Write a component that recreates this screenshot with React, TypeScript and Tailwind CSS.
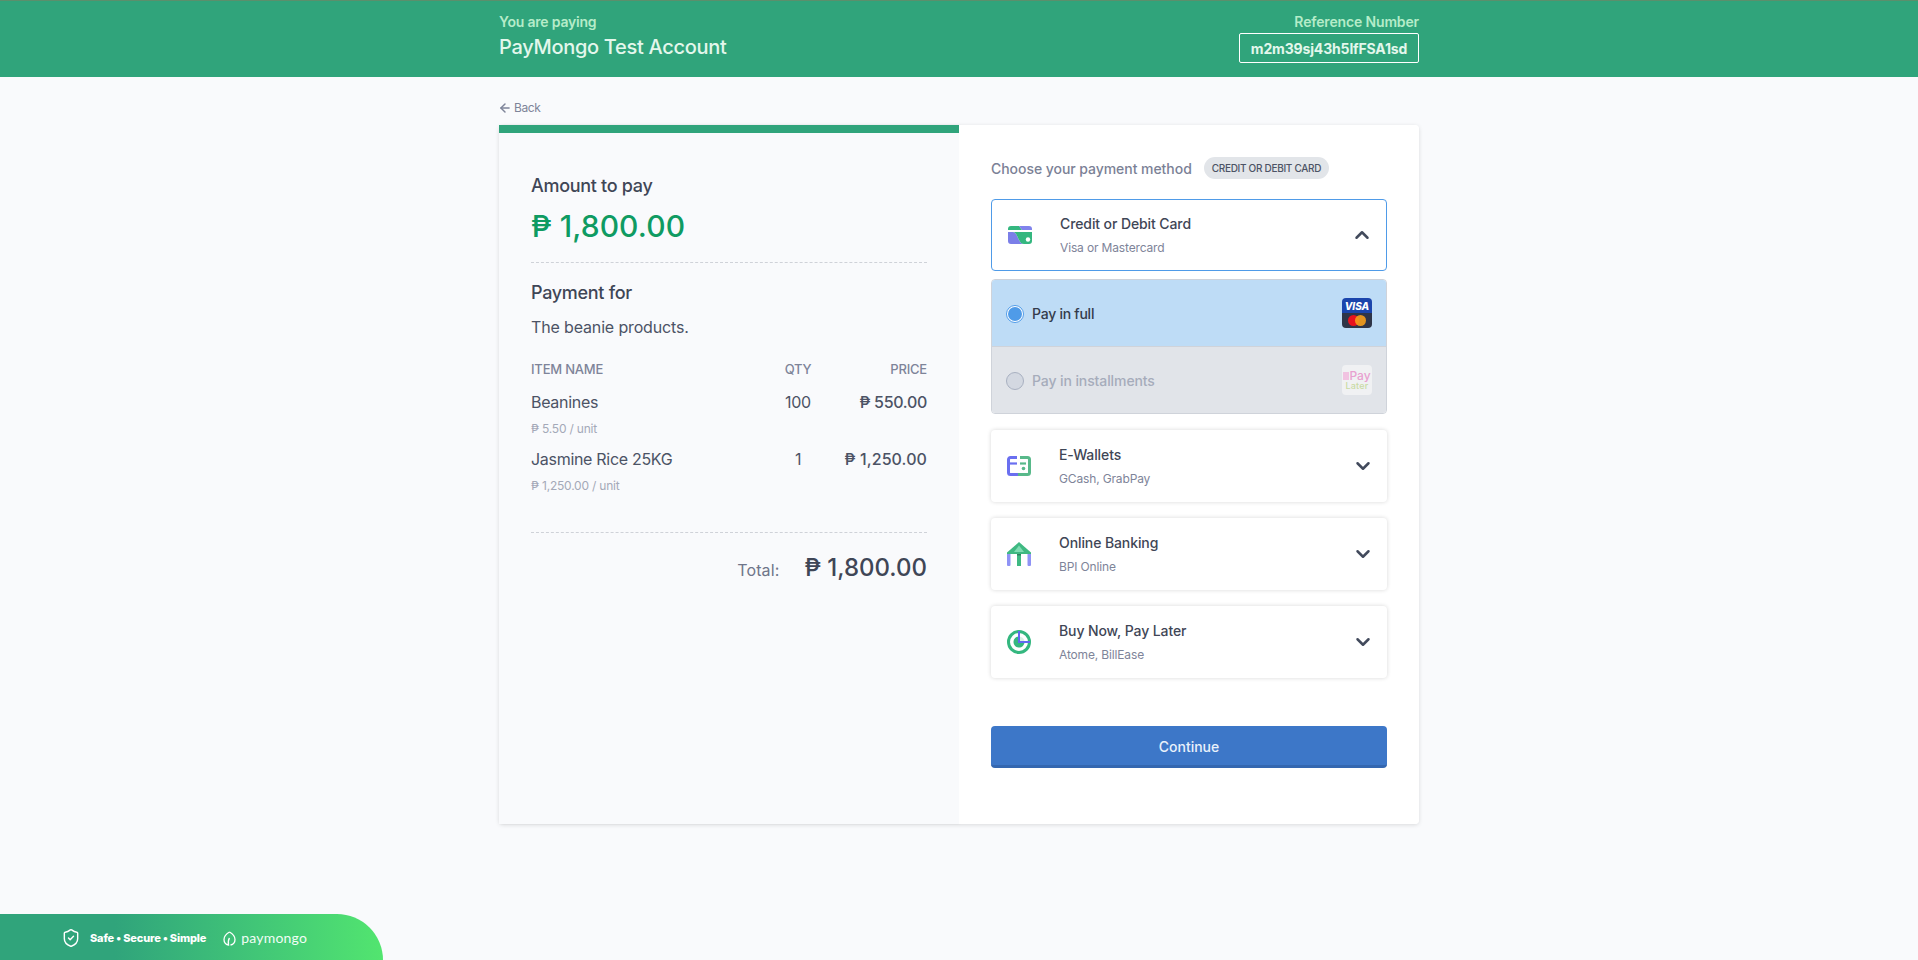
import { ArrowLeft, ChevronDown, ChevronUp, ShieldCheck } from 'lucide-react';
import type { ReactNode } from 'react';

function CardIcon() {
  return (
    <svg width="24" height="18" viewBox="0 0 24 18">
      <path d="M3 0h8l3 4H0V3a3 3 0 0 1 3-3z" fill="#34b77f" />
      <path d="M11 0h10a3 3 0 0 1 3 3v1h-10z" fill="#8083ec" />
      <path d="M0 6h5c5 0 5 12 11 12H3a3 3 0 0 1-3-3z" fill="#7b7fe8" />
      <path d="M5 6h19v9a3 3 0 0 1-3 3h-5C10 18 10 6 5 6z" fill="#34b77f" />
      <circle cx="20" cy="13.5" r="2.2" fill="#fff" />
    </svg>
  );
}

function WalletIcon() {
  return (
    <svg width="24" height="20" viewBox="0 0 24 20" fill="none">
      <path d="M10 1.500H3.500A2 2 0 0 0 1.500 3.500v13a2 2 0 0 0 2 2H11" stroke="#6a6ff0" strokeWidth="3" />
      <path d="M13 1.500h7.500a2 2 0 0 1 2 2v13a2 2 0 0 1-2 2H11" stroke="#58b98a" strokeWidth="3" />
      <path d="M2 7.500h8" stroke="#6a6ff0" strokeWidth="2.200" />
      <path d="M13 7.500h6" stroke="#58b98a" strokeWidth="2.200" />
      <circle cx="16.500" cy="12.500" r="1.800" fill="#58b98a" />
    </svg>
  );
}

function BankIcon() {
  return (
    <svg width="24" height="24" viewBox="0 0 24 24" fill="none">
      <path d="M0 11h3.500v12a1 1 0 0 1-1 1h-1.500a1 1 0 0 1-1-1zM20.500 11h3.500v12a1 1 0 0 1-1 1h-1.500a1 1 0 0 1-1-1z" fill="#8f93f5" />
      <path d="M10 11h4v12.500a.5.5 0 0 1-.5.5h-3a.5.5 0 0 1-.5-.5z" fill="#3fb982" />
      <path d="M12 0l12 10.500v1.500H0v-1.500z" fill="#3fb982" />
      <path d="M12 3.500l5 6.500H7z" fill="#7fdcb2" />
      <path d="M10 12h4v1.500h-4z" fill="#2f7f5e" />
    </svg>
  );
}

function PieIcon() {
  return (
    <svg width="24" height="24" viewBox="0 0 24 24" fill="none">
      <circle cx="12" cy="12" r="10.500" stroke="#34b77f" strokeWidth="3" />
      <circle cx="12" cy="12" r="5.500" fill="#d6f2e4" />
      <path d="M12 6.500a5.500 5.500 0 1 0 5.500 5.500H12z" fill="#34b77f" />
      <path d="M12 1v11h11" stroke="#6268f1" strokeWidth="2" />
    </svg>
  );
}

function VisaTile() {
  return (
    <div className="flex h-[30px] w-[30px] flex-col overflow-hidden rounded-[4px]">
      <div className="flex h-[15px] items-center justify-center bg-[#1b45ac] text-[10px] leading-none font-extrabold text-white italic">VISA</div>
      <div className="relative flex h-[15px] items-center justify-center bg-[#2f3548]">
        <span className="h-[11px] w-[11px] rounded-full bg-[#e8121f]" />
        <span className="-ml-[4px] h-[11px] w-[11px] rounded-full bg-[#f79e1b] opacity-90" />
      </div>
    </div>
  );
}

function PayLaterTile() {
  return (
    <div className="flex h-[30px] w-[30px] flex-col items-center justify-center rounded-[4px] bg-[#f0f1f3] leading-none">
      <span className="flex items-center text-[12px] leading-[11px] font-medium text-[#e8a0d0]">
        <span className="h-[8px] w-[6px] bg-[#f1c3e1]" />
        Pay
      </span>
      <span className="text-[9px] leading-[9px] font-medium tracking-[0.2px] text-[#c9dba4]">Later</span>
    </div>
  );
}

function Method({ icon, title, sub, open }: { icon: ReactNode; title: string; sub: string; open?: boolean }) {
  return (
    <div
      className={`flex h-[72px] items-center rounded-[4px] bg-white pr-[13px] pl-[16px] ${
        open ? 'border border-[#4f9be8]' : 'shadow-[0_0_4px_rgba(0,0,0,0.16)]'
      }`}
    >
      <div className="flex w-[24px] justify-center">{icon}</div>
      <div className="ml-[28px] flex-1">
        <p className="text-[14px] leading-[20px] font-medium tracking-[-0.1px] text-[#3f4656]">{title}</p>
        <p className="mt-[6px] text-[12px] leading-[16px] tracking-[-0.15px] text-[#7e8499]">{sub}</p>
      </div>
      {open ? <ChevronUp size={22} strokeWidth={2.7} className="text-[#424a5c]" /> : <ChevronDown size={22} strokeWidth={2.7} className="text-[#424a5c]" />}
    </div>
  );
}

export default function App() {
  return (
    <div className="relative min-h-[960px] bg-[#f9fafc] font-['Inter',sans-serif]">
      {/* Header */}
      <header className="h-[77px] border-t border-[#5b8f6c] bg-[#30a47b]">
        <div className="mx-auto flex w-[920px] items-start justify-between pt-[12px]">
          <div>
            <p className="text-[14px] leading-[18px] font-semibold tracking-[-0.2px] text-[#b5ecc9]">You are paying</p>
            <p className="mt-[2px] text-[20px] leading-[28px] font-medium tracking-[-0.3px] text-[#e3f7ec]">PayMongo Test Account</p>
          </div>
          <div className="flex flex-col items-end">
            <p className="text-[14px] leading-[18px] font-semibold tracking-[-0.15px] text-[#b5ecc9]">Reference Number</p>
            <p className="mt-[2px] flex h-[30px] w-[180px] items-center justify-center rounded-[2px] border border-white text-[14px] font-bold tracking-[-0.15px] text-[#e3f7ec]">
              m2m39sj43h5lfFSA1sd
            </p>
          </div>
        </div>
      </header>

      <main className="mx-auto w-[920px]">
        <a className="flex h-[48px] items-center gap-[2px] pt-[14px] text-[12px] tracking-[-0.4px] text-[#7e8499]">
          <ArrowLeft size={14} strokeWidth={2.5} className="-ml-[1px]" />
          Back
        </a>

        <div className="flex h-[699px] rounded-[4px] shadow-[0_1px_4px_rgba(0,0,0,0.13)]">
          {/* Summary */}
          <section className="w-[460px] border-t-[8px] border-[#30a47b] bg-[#f9fafc] px-[32px] pt-[41px] shadow-[1px_0_2px_rgba(0,0,0,0.05)]">
            <p className="text-[18px] leading-[24px] font-medium tracking-[-0.3px] text-[#3f4656]">Amount to pay</p>
            <p className="mt-[8px] text-[30px] leading-[40px] font-medium tracking-[0.1px] text-[#0f9b62]">₱ 1,800.00</p>
            <div className="mt-[16px] border-t border-dashed border-[#cfd2d8]" />

            <p className="mt-[18px] text-[18px] leading-[24px] font-medium tracking-[-0.3px] text-[#3f4656]">Payment for</p>
            <p className="mt-[10px] text-[16px] leading-[24px] tracking-[-0.15px] text-[#4c5365]">The beanie products.</p>

            <div className="mt-[21px] grid grid-cols-[1fr_60px_100px] text-[13px] leading-[18px] font-medium tracking-[-0.2px] text-[#7e8499]">
              <span>ITEM NAME</span>
              <span className="pl-[2px] text-center">QTY</span>
              <span className="text-right">PRICE</span>
            </div>

            <div className="mt-[13px] grid grid-cols-[1fr_60px_100px] text-[16px] leading-[22px] tracking-[-0.3px] text-[#4c5365]">
              <span>Beanines</span>
              <span className="pl-[2px] text-center">100</span>
              <span className="text-right font-medium">₱ 550.00</span>
            </div>
            <p className="mt-[8px] text-[12px] leading-[16px] tracking-[-0.2px] text-[#a4a9b8]">₱ 5.50 / unit</p>

            <div className="mt-[11px] grid grid-cols-[1fr_60px_100px] text-[16px] leading-[22px] tracking-[-0.3px] text-[#4c5365]">
              <span>Jasmine Rice 25KG</span>
              <span className="pl-[2px] text-center">1</span>
              <span className="text-right font-medium tracking-[0.1px]">₱ 1,250.00</span>
            </div>
            <p className="mt-[8px] text-[12px] leading-[16px] tracking-[-0.2px] text-[#a4a9b8]">₱ 1,250.00 / unit</p>

            <div className="mt-[38px] border-t border-dashed border-[#cfd2d8]" />

            <div className="mt-[19px] flex items-baseline justify-end gap-[25px]">
              <span className="text-[16px] tracking-[0.15px] text-[#6f7589]">Total:</span>
              <span className="text-[24px] leading-[32px] font-medium text-[#3f4656]">₱ 1,800.00</span>
            </div>
          </section>

          {/* Payment methods */}
          <section className="w-[460px] rounded-r-[4px] bg-white px-[32px] pt-[31px]">
            <div className="flex h-[24px] items-center gap-[12px]">
              <p className="text-[14px] font-medium tracking-[-0.05px] text-[#7b8196]">Choose your payment method</p>
              <span className="flex h-[22px] items-center rounded-full bg-[#e2e5e9] px-[8px] text-[10px] font-medium tracking-[-0.3px] text-[#4c5365]">
                CREDIT OR DEBIT CARD
              </span>
            </div>

            <div className="mt-[19px]">
              <Method icon={<CardIcon />} title="Credit or Debit Card" sub="Visa or Mastercard" open />
            </div>

            <div className="mt-[8px] overflow-hidden rounded-[4px] border border-[#cfd3da]">
              <div className="flex h-[67px] items-center border-b border-[#cfd3da] bg-[#bedcf6] px-[14px]">
                <span className="mt-[2px] flex h-[18px] w-[18px] items-center justify-center rounded-full border border-[#4f9be8] bg-white">
                  <span className="h-[14px] w-[14px] rounded-full bg-[#4f9be8]" />
                </span>
                <span className="ml-[8px] flex-1 text-[14px] font-medium tracking-[-0.25px] text-[#343b4b]">Pay in full</span>
                <VisaTile />
              </div>
              <div className="flex h-[66px] items-center bg-[#e1e4e9] px-[14px]">
                <span className="mt-[2px] h-[18px] w-[18px] rounded-full border border-[#a8b0c0] bg-[#d3d8e1]" />
                <span className="ml-[8px] flex-1 text-[14px] font-medium tracking-[-0.1px] text-[#a6acbb]">Pay in installments</span>
                <PayLaterTile />
              </div>
            </div>

            <div className="mt-[16px] flex flex-col gap-[16px]">
              <Method icon={<WalletIcon />} title="E-Wallets" sub="GCash, GrabPay" />
              <Method icon={<BankIcon />} title="Online Banking" sub="BPI Online" />
              <Method icon={<PieIcon />} title="Buy Now, Pay Later" sub="Atome, BillEase" />
            </div>

            <button className="mt-[48px] h-[42px] w-full rounded-[4px] border-b-[3px] border-[#3467b0] bg-[#3d77c8] pt-[2px] text-[14px] font-medium text-[#e9f1fb]">
              Continue
            </button>
          </section>
        </div>
      </main>

      {/* Footer badge */}
      <div className="fixed bottom-0 left-0 flex h-[46px] w-[383px] items-center rounded-tr-[46px] bg-gradient-to-r from-[#30a47b] from-30% to-[#52e56f] pt-[2px] pl-[61px]">
        <ShieldCheck size={20} strokeWidth={1.7} className="text-white" />
        <span className="ml-[9px] text-[11px] font-extrabold tracking-[-0.15px] text-white">Safe • Secure • Simple</span>
        <svg className="ml-[17px]" width="13" height="15" viewBox="0 0 13 15" fill="none">
          <path d="M6.500 1C3 3 1 5.500 1 8.500 1 11.500 3 13.500 5.500 14 5 11 5 9 6.500 7M6.500 1C10 3 12 5.500 12 8.500 12 11.500 10 13.500 7.500 14" stroke="#fff" strokeWidth="1.300" />
        </svg>
        <span className="ml-[5px] font-['Lato',sans-serif] text-[14px] leading-none tracking-[0.2px] text-[#f0fdf5]">paymongo</span>
      </div>
    </div>
  );
}
